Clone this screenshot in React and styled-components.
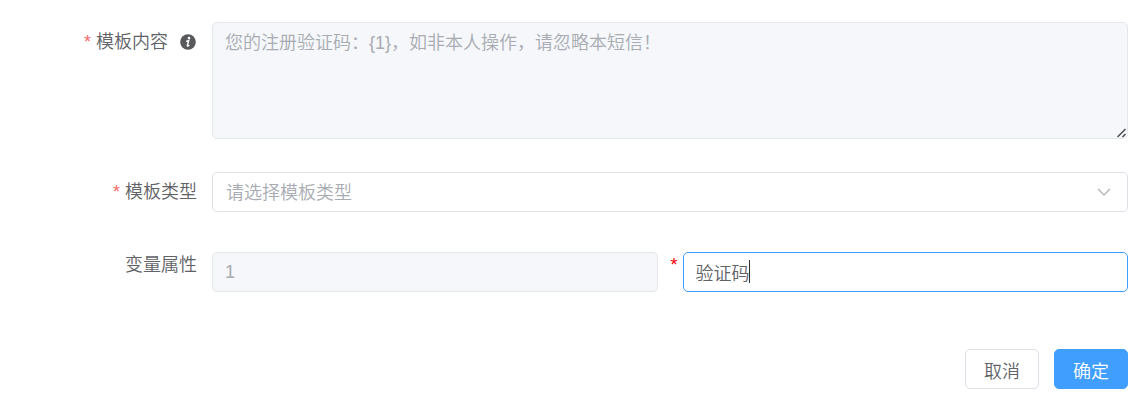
import React, { useState } from "react";
import styled, { createGlobalStyle } from "styled-components";

const CHAR_WIDTH = 18;
const INPUT_PADDING = 12;

export default function App() {
  const [type, setType] = useState("");
  const [name, setName] = useState("验证码");

  return (
    <>
      <GlobalStyle />
      <Form onSubmit={(e) => e.preventDefault()}>
        <FormItem>
          <Label htmlFor="content">
            <Required>*</Required>
            模板内容
            <InfoIcon />
          </Label>
          <Field>
            <TextArea
              id="content"
              disabled
              placeholder="您的注册验证码：{1}，如非本人操作，请忽略本短信！"
            />
            <ResizeIcon />
          </Field>
        </FormItem>
        <FormItem>
          <Label htmlFor="type">
            <Required>*</Required>
            模板类型
          </Label>
          <Field>
            <Select
              id="type"
              value={type}
              onChange={(e) => setType(e.target.value)}
            >
              <option value="">请选择模板类型</option>
            </Select>
            <ChevronIcon />
          </Field>
        </FormItem>
        <FormItem>
          <Label htmlFor="variable">变量属性</Label>
          <VariableRow>
            <Field>
              <Input id="variable" disabled value="1" readOnly />
            </Field>
            <Star>*</Star>
            <Field>
              <Input
                aria-label="变量属性名称"
                autoFocus
                value={name}
                onChange={(e) => setName(e.target.value)}
              />
              <Caret
                style={{ left: INPUT_PADDING + name.length * CHAR_WIDTH }}
              />
            </Field>
          </VariableRow>
        </FormItem>
        <Footer>
          <Button type="button">取消</Button>
          <Button type="submit" $primary>
            确定
          </Button>
        </Footer>
      </Form>
    </>
  );
}

function InfoIcon() {
  return (
    <Info viewBox="0 0 16 16" aria-hidden="true">
      <circle cx="8" cy="8" r="7.8" fill="#58595c" />
      <circle cx="9" cy="4.1" r="1.3" fill="#fff" />
      <path
        d="M6.1 7.4 8.7 6.5 7.3 11.6Q7.1 12.7 9.3 11.2"
        fill="none"
        stroke="#fff"
        strokeWidth="1.4"
      />
    </Info>
  );
}

function ChevronIcon() {
  return (
    <Chevron viewBox="0 0 14 8" aria-hidden="true">
      <path d="M1 1 7 7 13 1" fill="none" stroke="#a8abb2" strokeWidth="1.1" />
    </Chevron>
  );
}

function ResizeIcon() {
  return (
    <Resize viewBox="0 0 10 10" aria-hidden="true">
      <path
        d="M0.5 9 8.5 1M5.5 9 8.5 6"
        fill="none"
        stroke="#4a4b4e"
        strokeWidth="1.5"
      />
    </Resize>
  );
}

const GlobalStyle = createGlobalStyle`
  * {
    box-sizing: border-box;
  }

  body {
    margin: 0;
    background: #fff;
  }

  body, button, input, select, textarea {
    font-family: "Liberation Sans", "Noto Sans CJK SC", sans-serif;
    font-size: 18px;
    font-weight: 350;
    color: #606266;
  }
`;

const Form = styled.form`
  padding: 22px 18px 15px 0;
`;

const FormItem = styled.div`
  display: grid;
  grid-template-columns: 197px 1fr;
  column-gap: 15px;
  margin-bottom: 33px;
`;

const Label = styled.label`
  display: flex;
  justify-content: flex-end;
  align-items: center;
  height: 40px;
  line-height: 42px;
`;

const Required = styled.span`
  margin-right: 5px;
  color: #f56c6c;
`;

const Info = styled.svg`
  width: 16px;
  height: 16px;
  margin: 0 1px 0 12px;
`;

const Field = styled.div`
  position: relative;
  flex: 1;
  min-width: 0;
`;

const TextArea = styled.textarea`
  display: block;
  width: 100%;
  height: 117px;
  padding: 7px 12px;
  border: 1px solid #e4e7ed;
  border-radius: 5px;
  background: #f5f7fa;
  line-height: 26px;
  resize: vertical;

  &::placeholder {
    color: #a8abb2;
  }

  &::-webkit-resizer {
    background: transparent;
  }
`;

const Resize = styled.svg`
  position: absolute;
  right: 1px;
  bottom: 1px;
  width: 10px;
  height: 10px;
  pointer-events: none;
`;

const Select = styled.select`
  display: block;
  width: 100%;
  height: 40px;
  padding: 2px 40px 0 13px;
  border: 1px solid #dcdfe6;
  border-radius: 5px;
  background: #fff;
  color: #a8abb2;
  appearance: none;
`;

const Chevron = styled.svg`
  position: absolute;
  top: 16px;
  right: 17px;
  width: 14px;
  height: 8px;
  pointer-events: none;
`;

const VariableRow = styled.div`
  display: flex;
  padding-top: 7px;
`;

const Input = styled.input`
  display: block;
  width: 100%;
  height: 40px;
  padding: 0 ${INPUT_PADDING}px;
  border: 1px solid #dcdfe6;
  border-radius: 5px;
  background: #fff;
  outline: none;
  caret-color: transparent;

  &:focus {
    border-color: #409eff;
  }

  &:disabled {
    border-color: #e4e7ed;
    background: #f5f7fa;
    color: #a8abb2;
  }
`;

const Caret = styled.span`
  position: absolute;
  top: 8px;
  width: 1px;
  height: 23px;
  background: #303133;
  pointer-events: none;
`;

const Star = styled.span`
  width: 25px;
  padding-right: 5px;
  color: red;
  line-height: 26px;
  text-align: right;
`;

const Footer = styled.div`
  display: flex;
  justify-content: flex-end;
  gap: 15px;
  padding-top: 24px;
`;

const Button = styled.button`
  height: 40px;
  padding: 2px 18px 0;
  border: 1px solid ${(props) => (props.$primary ? "#409eff" : "#dcdfe6")};
  border-radius: 5px;
  background: ${(props) => (props.$primary ? "#409eff" : "#fff")};
  color: ${(props) => (props.$primary ? "#fff" : "#606266")};
  cursor: pointer;
`;
